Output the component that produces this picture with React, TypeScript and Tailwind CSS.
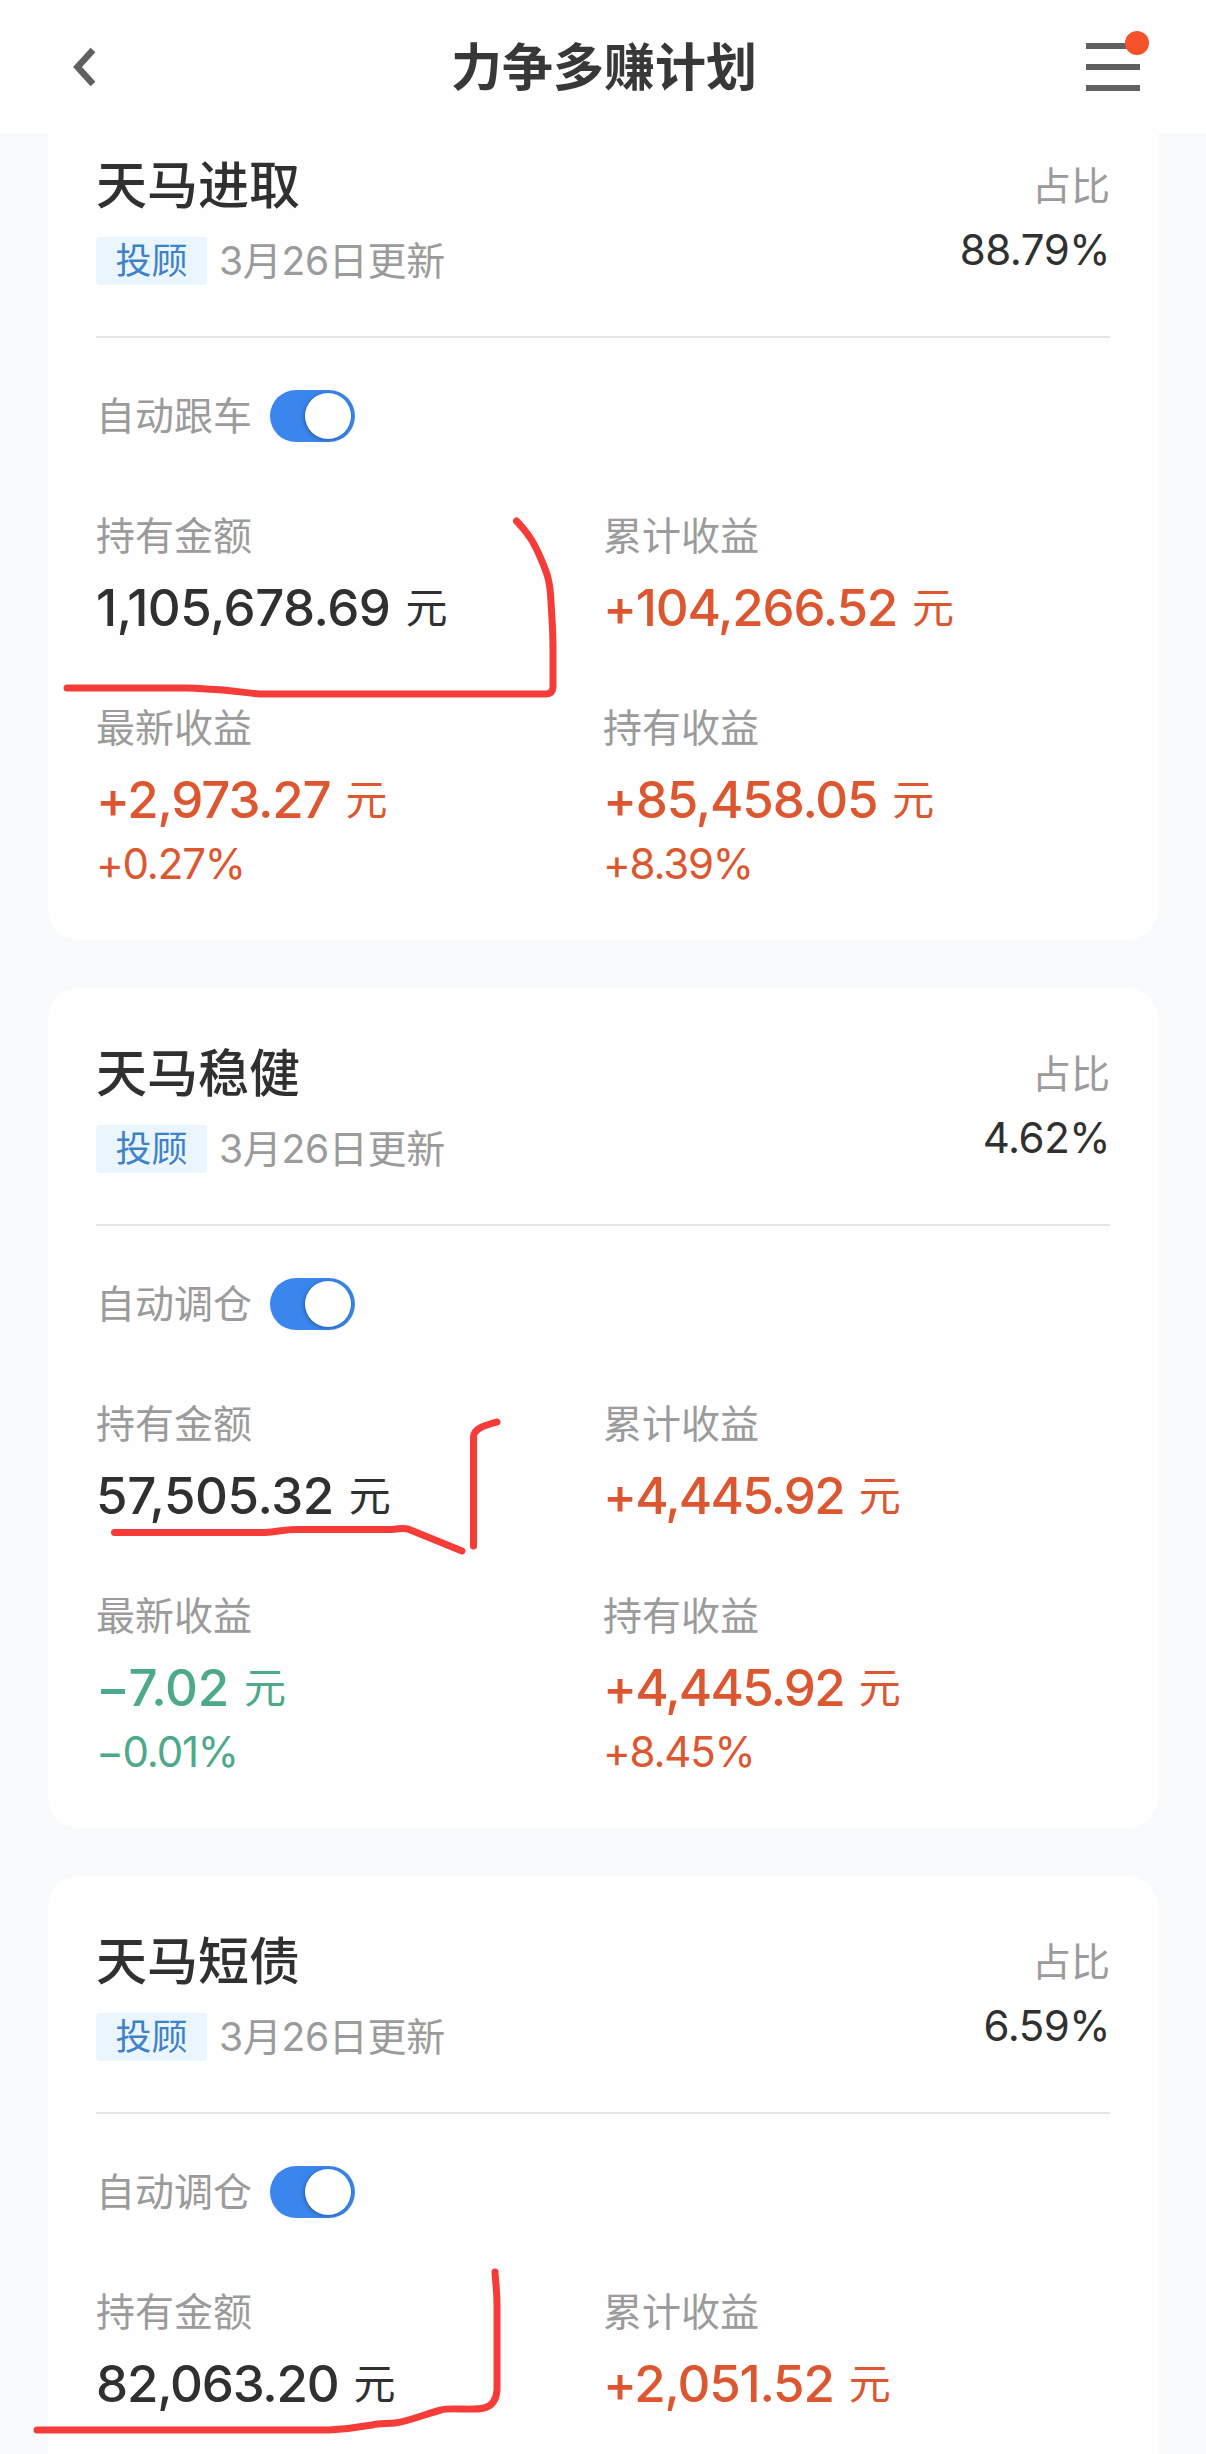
import React from "react";

type Tone = "plain" | "up" | "down";

interface Metric {
  label: string;
  value: string;
  percent?: string;
  tone: Tone;
  tracking?: string;
}

interface Plan {
  name: string;
  updated: string;
  ratio: string;
  autoLabel: string;
  metrics: Metric[];
}

const plans: Plan[] = [
  {
    name: "天马进取",
    updated: "3月26日更新",
    ratio: "88.79%",
    autoLabel: "自动跟车",
    metrics: [
      {
        label: "持有金额",
        value: "1,105,678.69",
        tone: "plain",
        tracking: "tracking-[-0.5px]",
      },
      { label: "累计收益", value: "+104,266.52", tone: "up" },
      { label: "最新收益", value: "+2,973.27", percent: "+0.27%", tone: "up" },
      { label: "持有收益", value: "+85,458.05", percent: "+8.39%", tone: "up" },
    ],
  },
  {
    name: "天马稳健",
    updated: "3月26日更新",
    ratio: "4.62%",
    autoLabel: "自动调仓",
    metrics: [
      {
        label: "持有金额",
        value: "57,505.32",
        tone: "plain",
        tracking: "tracking-[-0.4px]",
      },
      {
        label: "累计收益",
        value: "+4,445.92",
        tone: "up",
        tracking: "tracking-[-1.8px]",
      },
      {
        label: "最新收益",
        value: "−7.02",
        percent: "−0.01%",
        tone: "down",
        tracking: "tracking-[-0.2px]",
      },
      {
        label: "持有收益",
        value: "+4,445.92",
        percent: "+8.45%",
        tone: "up",
        tracking: "tracking-[-1.8px]",
      },
    ],
  },
  {
    name: "天马短债",
    updated: "3月26日更新",
    ratio: "6.59%",
    autoLabel: "自动调仓",
    metrics: [
      { label: "持有金额", value: "82,063.20", tone: "plain" },
      { label: "累计收益", value: "+2,051.52", tone: "up" },
    ],
  },
];

const toneClass: Record<Tone, string> = {
  plain: "text-[#303030]",
  up: "text-[#dc5730]",
  down: "text-[#4ca98a]",
};

const Header: React.FC = () => (
  <header className="relative z-10 grid h-[133px] grid-cols-[1fr_auto_1fr] items-center bg-[#fefefe] pr-[66px] pl-[68px]">
    <svg width="30" height="40" viewBox="0 0 30 40" fill="none">
      <path d="M25 3 9.500 20 25 37" stroke="#606060" strokeWidth="6.5" />
    </svg>
    <h1 className="pt-0.5 text-[51px] leading-[64px] font-bold text-[#383838]">
      力争多赚计划
    </h1>
    <div className="relative flex w-[54px] flex-col gap-[15px] justify-self-end">
      <span className="h-1.5 bg-[#606060]" />
      <span className="h-1.5 bg-[#606060]" />
      <span className="h-1.5 bg-[#606060]" />
      <span className="absolute -top-3 -right-[9px] size-6 rounded-full bg-[#f5512a]" />
    </div>
  </header>
);

const Toggle: React.FC = () => (
  <div className="flex h-[52px] w-[85px] items-center justify-end rounded-full bg-[#3a86ed] pr-1">
    <span className="size-[46px] rounded-full bg-white shadow-[-1px_1px_4px_rgba(0,0,0,0.3)]" />
  </div>
);

const MetricCell: React.FC<{ metric: Metric }> = ({ metric }) => (
  <div className="flex flex-col">
    <span className="text-[39px] leading-[52px] text-[#9b9b9b]">
      {metric.label}
    </span>
    <div
      className={`mt-4 flex h-[60px] items-center gap-[15px] ${toneClass[metric.tone]}`}
    >
      <span
        className={`text-[51px] leading-[60px] font-medium ${metric.tracking ?? "tracking-[-1.2px]"}`}
      >
        {metric.value}
      </span>
      <span className="text-[42px] leading-[60px]">元</span>
    </div>
    {metric.percent && (
      <span
        className={`mt-2.5 text-[42px] leading-[48px] tracking-[-1.2px] ${toneClass[metric.tone]}`}
      >
        {metric.percent}
      </span>
    )}
  </div>
);

const PlanCard: React.FC<{ plan: Plan }> = ({ plan }) => (
  <section className="h-[840px] shrink-0 rounded-[30px] bg-[#fefefe] px-12 pt-[54px]">
    <div className="flex h-[182px] justify-between">
      <div className="flex flex-col gap-[19px]">
        <h2 className="text-[51px] leading-[64px] font-medium text-[#303030]">
          {plan.name}
        </h2>
        <div className="flex items-center gap-3">
          <span className="flex h-12 w-[111px] items-center justify-center rounded bg-[#ebf5fd] text-[36px] leading-[48px] text-[#3d82c8]">
            投顾
          </span>
          <span className="text-[39px] leading-[48px] tracking-[-0.3px] text-[#9b9b9b]">
            {plan.updated}
          </span>
        </div>
      </div>
      <div className="flex flex-col items-end">
        <span className="text-[39px] leading-[64px] text-[#9b9b9b]">
          占比
        </span>
        <span className="mt-2 text-[42px] leading-[48px] tracking-[-0.5px] text-[#303030]">
          {plan.ratio}
        </span>
      </div>
    </div>

    <div className="h-0.5 bg-[#e6e6e6]" />

    <div className="mt-[52px] flex items-center gap-[18px]">
      <span className="text-[39px] leading-[52px] text-[#9b9b9b]">
        {plan.autoLabel}
      </span>
      <Toggle />
    </div>

    <div className="mt-[68px] grid grid-cols-[507px_1fr] gap-y-16">
      {plan.metrics.map((metric) => (
        <MetricCell key={metric.label} metric={metric} />
      ))}
    </div>
  </section>
);

// Freehand pen marks drawn over the holdings
const PenMarks: React.FC = () => (
  <svg
    className="pointer-events-none absolute inset-0 z-20"
    width="1206"
    height="2454"
    viewBox="0 0 1206 2454"
    fill="none"
    stroke="#f63c38"
    strokeWidth="7"
    strokeLinecap="round"
    strokeLinejoin="round"
  >
    <path d="M516.5 521C530 535 535 545 541 559C548 575 550 582 551 602C552 620 553 630 553 650V687Q552.500 694 546 694H260C245 693 230 690 215 689.500C205 689.500 200 688 187 688H67" />
    <path d="M114.500 1532.500H265C278 1532 282 1529.500 297 1529.500H392Q403 1528 408 1529L462 1551" />
    <path d="M473.500 1546V1437C473.500 1428 486 1425 497 1422" />
    <path d="M495 2272C495.500 2282 497 2290 497 2305V2390Q496 2405 484 2408C472 2411 450 2407 441 2410C425 2414 410 2421 395 2423C385 2424 380 2423 372 2425C355 2428 345 2429 329 2430H37" />
  </svg>
);

const App: React.FC = () => {
  return (
    <div className="relative h-[2454px] w-[1206px] overflow-hidden bg-[#f9fafc] font-['Inter','Noto_Sans_CJK_SC',sans-serif]">
      <Header />
      <main className="-mt-[33px] flex flex-col gap-12 px-12">
        {plans.map((plan) => (
          <PlanCard key={plan.name} plan={plan} />
        ))}
      </main>
      <PenMarks />
    </div>
  );
};

export default App;
